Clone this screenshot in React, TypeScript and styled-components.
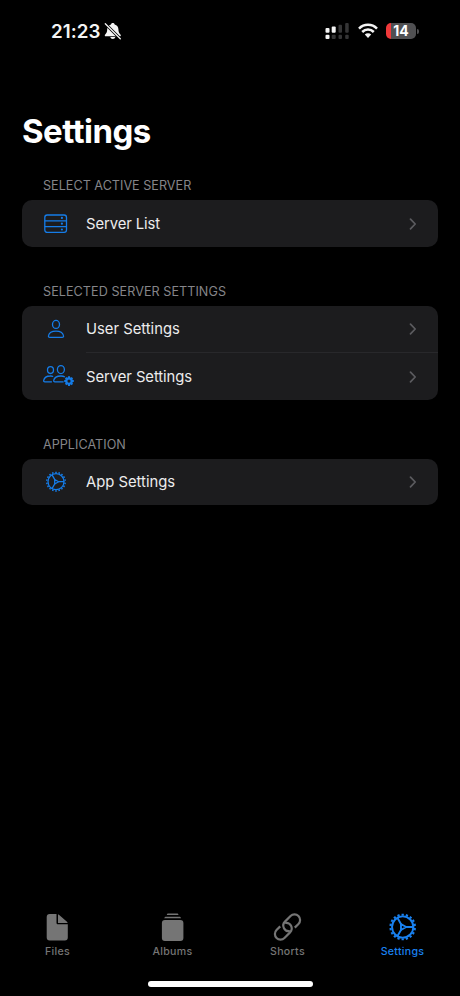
import React from "react";
import styled, { createGlobalStyle } from "styled-components";

const Global = createGlobalStyle`
  * { box-sizing: border-box; }
  html, body { margin: 0; background: #000; }
  body { font-family: Inter, "Liberation Sans", sans-serif; -webkit-font-smoothing: antialiased; }
`;

const Screen = styled.div`
  width: 460px;
  height: 996px;
  background: #000;
  display: flex;
  flex-direction: column;
  overflow: hidden;
`;

const StatusBar = styled.header`
  height: 62px;
  padding: 0 41px 0 51px;
  display: flex;
  align-items: center;
  justify-content: space-between;
  color: #f4f4f4;
`;

const StatusGroup = styled.div<{ $gap: number }>`
  display: flex;
  align-items: center;
  gap: ${(p) => p.$gap}px;
`;

const Clock = styled.span`
  width: 51px;
  padding-top: 2px;
  font-size: 18.8px;
  font-weight: 600;
  line-height: 22px;
  letter-spacing: 0.05px;
  white-space: nowrap;
`;

const Battery = styled.div`
  width: 30px;
  height: 16px;
  border-radius: 5px;
  background: linear-gradient(90deg, #f0393a 5px, #505052 5px);
  color: #fff;
  font-size: 14px;
  font-weight: 700;
  line-height: 16px;
  text-align: center;
`;

const BatteryTip = styled.div`
  width: 2px;
  height: 5px;
  border-radius: 0 2px 2px 0;
  background: #505052;
`;

const Content = styled.main`
  flex: 1;
  padding: 49px 22px 0;
`;

const Title = styled.h1`
  margin: 0;
  height: 41px;
  font-size: 33px;
  font-weight: 700;
  line-height: 40px;
  letter-spacing: -0.55px;
  color: #fff;
`;

const Section = styled.section<{ $top: number }>`
  margin-top: ${(p) => p.$top}px;
`;

const SectionTitle = styled.h2<{ $spacing: number }>`
  margin: 0;
  padding: 0 21px 6px;
  font-size: 12.6px;
  font-weight: 400;
  line-height: 16px;
  letter-spacing: ${(p) => p.$spacing}px;
  color: #858589;
`;

const Card = styled.div`
  border-radius: 10px;
  background: #1c1c1e;
  overflow: hidden;
`;

const Row = styled.div<{ $height: number }>`
  height: ${(p) => p.$height}px;
  padding-left: 18px;
  display: flex;
  align-items: center;
`;

const IconSlot = styled.span`
  width: 46px;
  height: 32px;
  flex: none;
  color: #157ce8;
  svg { display: block; }
`;

const RowBody = styled.div<{ $divided?: boolean }>`
  flex: 1;
  height: 100%;
  padding-right: 21px;
  display: flex;
  align-items: center;
  justify-content: space-between;
  border-top: ${(p) => (p.$divided ? "1px solid #28282b" : "none")};
`;

const Label = styled.span<{ $spacing: number }>`
  font-size: 14.8px;
  line-height: 20px;
  letter-spacing: ${(p) => p.$spacing}px;
  color: #ececed;
`;

const TabBar = styled.nav`
  height: 69px;
  display: grid;
  grid-template-columns: repeat(4, 115px);
`;

const Tab = styled.div<{ $active?: boolean }>`
  display: flex;
  flex-direction: column;
  align-items: center;
  color: ${(p) => (p.$active ? "#1981f0" : "#757575")};
  svg { display: block; }
`;

const TabLabel = styled.span`
  margin-top: 2px;
  font-size: 10.6px;
  font-weight: 500;
  line-height: 15px;
  letter-spacing: 0.28px;
`;

const HomeArea = styled.footer`
  height: 15px;
  display: flex;
  justify-content: center;
  align-items: flex-start;
`;

const HomeBar = styled.div`
  width: 165px;
  height: 6px;
  border-radius: 3px;
  background: #fff;
`;

const polar = (cx: number, cy: number, r: number, deg: number) => {
  const a = (deg * Math.PI) / 180;
  return `${(cx + r * Math.cos(a)).toFixed(2)} ${(cy + r * Math.sin(a)).toFixed(2)}`;
};

function Gear({ cx, cy, r, stroke }: { cx: number; cy: number; r: number; stroke: number }) {
  const teeth = Array.from({ length: 18 }, (_, i) => i * 20 + 10)
    .map((d) => `M${polar(cx, cy, r * 0.85, d)}L${polar(cx, cy, r, d)}`)
    .join("");
  const spokes = [0, 120, 240]
    .map((d) => `M${polar(cx, cy, r * 0.24, d)}L${polar(cx, cy, r * 0.82, d)}`)
    .join("");
  const hub = `M${polar(cx, cy, r * 0.26, 0)}L${polar(cx, cy, r * 0.26, 120)}L${polar(cx, cy, r * 0.26, 240)}Z`;
  return (
    <g fill="none" stroke="currentColor" strokeWidth={stroke}>
      <circle cx={cx} cy={cy} r={r * 0.8} />
      <path d={teeth} strokeWidth={stroke * 1.2} />
      <path d={spokes} />
      <path d={hub} strokeLinejoin="round" />
    </g>
  );
}

const MutedBell = () => (
  <svg width="18" height="18" viewBox="0.700 0 18 18">
    <path d="M9.500 1c-1 0-1.700.6-1.800 1.400C5.200 3.100 3.900 5 3.900 7.300c0 2.700-.8 4-2 5.100-.8.800-.4 1.800.6 1.800h14c1 0 1.400-1 .6-1.800-1.200-1.100-2-2.400-2-5.100 0-2.300-1.300-4.200-3.800-4.900C11.200 1.600 10.500 1 9.500 1ZM6.900 15a2.700 2.700 0 0 0 5.200 0Z" fill="currentColor" />
    <path d="M2 1.700 17 16.700" stroke="#000" strokeWidth="2.900" />
    <path d="M2 1.700 17 16.700" stroke="currentColor" strokeWidth="1.300" strokeLinecap="round" />
  </svg>
);

const Signal = () => (
  <svg width="25" height="18" viewBox="0 0 25 18">
    <g fill="#f4f4f4">
      <rect x="0.500" y="6" width="4" height="4.800" rx="1" />
      <rect x="6.700" y="4.500" width="4" height="6.300" rx="1" />
      <rect x="0.500" y="12.700" width="4" height="4.300" rx="1" />
    </g>
    <g fill="#353536">
      <rect x="13.500" y="2.800" width="3.500" height="8" rx="1" />
      <rect x="20.200" y="1" width="3.500" height="9.800" rx="1" />
      <rect x="6.700" y="12.700" width="4" height="4.300" rx="1" />
      <rect x="13.500" y="12.700" width="3.500" height="4.300" rx="1" />
      <rect x="20.200" y="12.700" width="3.500" height="4.300" rx="1" />
    </g>
  </svg>
);

const Wifi = () => (
  <svg width="20" height="16" viewBox="0 0 20 16">
    <g fill="none" stroke="currentColor" strokeWidth="2.500">
      <path d="M1 5.600a12.700 12.700 0 0 1 18 0" />
      <path d="M4.200 9a8.200 8.200 0 0 1 11.600 0" />
    </g>
    <path d="M6.800 11.600a4.500 4.500 0 0 1 6.400 0L10 14.900Z" fill="currentColor" />
  </svg>
);

const ServerIcon = () => (
  <svg width="46" height="32" viewBox="0 0 46 32">
    <g fill="none" stroke="currentColor" strokeWidth="1.300">
      <rect x="4.800" y="7" width="21.700" height="17.400" rx="2.400" />
      <path d="M4.800 12.800h21.700M4.800 18.600h21.700" />
    </g>
    <g fill="currentColor">
      <circle cx="21.900" cy="9.900" r="1.100" />
      <circle cx="21.900" cy="15.700" r="1.100" />
      <circle cx="21.900" cy="21.500" r="1.100" />
    </g>
  </svg>
);

const UserIcon = () => (
  <svg width="46" height="32" viewBox="0 0 46 32">
    <g fill="none" stroke="currentColor" strokeWidth="1.300">
      <ellipse cx="16" cy="11.400" rx="3.500" ry="4" />
      <path d="M9.800 24.300c-1.100 0-1.500-.7-1.300-1.600.5-2.600 3.400-4.600 7.500-4.600s7 2 7.500 4.600c.2.900-.2 1.600-1.300 1.600Z" />
    </g>
  </svg>
);

const UsersGearIcon = () => {
  const teeth = Array.from({ length: 8 }, (_, i) => i * 45)
    .map((d) => `M${polar(29, 20.4, 3, d)}L${polar(29, 20.4, 4.8, d)}`)
    .join("");
  return (
    <svg width="46" height="32" viewBox="0 -0.700 46 32">
      <g fill="none" stroke="currentColor" strokeWidth="1.300">
        <ellipse cx="10.500" cy="9.400" rx="3" ry="3.400" />
        <path d="M13.200 15.800a8 8 0 0 0-3-.5c-3.700 0-6 2-6.500 4.300-.2.900.2 1.500 1.200 1.500h7" />
        <ellipse cx="20.900" cy="8.900" rx="3.500" ry="4" />
        <path d="M24.900 16.300c-1-.6-2.400-1-4-1-4 0-6.700 2-7.200 4.400-.2.800.2 1.400 1.200 1.400h8.700" />
        <circle cx="29" cy="20.400" r="2.700" strokeWidth="2.200" />
        <path d={teeth} strokeWidth="2" />
      </g>
    </svg>
  );
};

const AppGearIcon = () => (
  <svg width="46" height="32" viewBox="0 0 46 32">
    <Gear cx={16} cy={15.7} r={10} stroke={1.3} />
  </svg>
);

const Chevron = () => (
  <svg width="8" height="12" viewBox="0 0.500 8 12">
    <path d="m1.500 1.700 4.700 4.800-4.700 4.800" fill="none" stroke="#5b5b5f" strokeWidth="1.700" strokeLinecap="round" strokeLinejoin="round" />
  </svg>
);

const FilesIcon = () => (
  <svg width="30" height="30" viewBox="0.700 0 30 30">
    <g fill="currentColor">
      <path d="M7.400 2h6.800v8.700c0 1 .6 1.600 1.600 1.600h9.700v13.200c0 2-1 3-3 3H7.400c-2 0-3-1-3-3V5c0-2 1-3 3-3Z" />
      <path d="M15.700 2.200c.6.200 1 .5 1.500 1l7.200 6.200c.5.500.8.900 1 1.500h-9.700Z" />
    </g>
  </svg>
);

const AlbumsIcon = () => (
  <svg width="30" height="30" viewBox="0.600 0 30 30">
    <g fill="currentColor">
      <rect x="4.500" y="8" width="21.500" height="21" rx="3" />
      <path d="M6.800 6.300c.2-1 .8-1.600 1.900-1.600h13.100c1.100 0 1.700.6 1.900 1.600ZM9.400 2.900c.2-.9.700-1.400 1.500-1.400h8.700c.8 0 1.300.5 1.500 1.400Z" />
    </g>
  </svg>
);

const LinkIcon = () => (
  <svg width="30" height="30" viewBox="0 0 30 30">
    <g transform="rotate(-45 14.500 15)" fill="none" stroke="currentColor" strokeWidth="2.200" strokeLinecap="butt">
      <path d="M9.800 9.400H4.600a5.600 5.600 0 0 0 0 11.200h7.900a5.600 5.600 0 0 0 3.200-10.200" />
      <path d="M19.200 20.600h5.200a5.600 5.600 0 0 0 0-11.200h-7.900a5.600 5.600 0 0 0-3.200 10.200" />
    </g>
  </svg>
);

const TabGearIcon = () => (
  <svg width="30" height="30" viewBox="0 0 30 30">
    <Gear cx={14.7} cy={15} r={13.3} stroke={1.9} />
  </svg>
);

type Item = { label: string; spacing: number; icon: React.ReactNode; height: number };
type Group = { title: string; spacing: number; top: number; items: Item[] };

const groups: Group[] = [
  {
    title: "SELECT ACTIVE SERVER", spacing: 0.02, top: 26,
    items: [{ label: "Server List", spacing: -0.08, icon: <ServerIcon />, height: 47 }],
  },
  {
    title: "SELECTED SERVER SETTINGS", spacing: 0.06, top: 37,
    items: [
      { label: "User Settings", spacing: 0, icon: <UserIcon />, height: 46 },
      { label: "Server Settings", spacing: -0.06, icon: <UsersGearIcon />, height: 48 },
    ],
  },
  {
    title: "APPLICATION", spacing: 0.03, top: 37,
    items: [{ label: "App Settings", spacing: 0, icon: <AppGearIcon />, height: 46 }],
  },
];

const tabs = [
  { label: "Files", icon: <FilesIcon /> },
  { label: "Albums", icon: <AlbumsIcon /> },
  { label: "Shorts", icon: <LinkIcon /> },
  { label: "Settings", icon: <TabGearIcon />, active: true },
];

export default function App() {
  return (
    <Screen>
      <Global />
      <StatusBar>
        <StatusGroup $gap={2}>
          <Clock>21:23</Clock>
          <MutedBell />
        </StatusGroup>
        <StatusGroup $gap={8}>
          <Signal />
          <Wifi />
          <StatusGroup $gap={1}>
            <Battery>14</Battery>
            <BatteryTip />
          </StatusGroup>
        </StatusGroup>
      </StatusBar>
      <Content>
        <Title>Settings</Title>
        {groups.map((g) => (
          <Section key={g.title} $top={g.top}>
            <SectionTitle $spacing={g.spacing}>{g.title}</SectionTitle>
            <Card>
              {g.items.map((item, i) => (
                <Row key={item.label} $height={item.height}>
                  <IconSlot>{item.icon}</IconSlot>
                  <RowBody $divided={i > 0}>
                    <Label $spacing={item.spacing}>{item.label}</Label>
                    <Chevron />
                  </RowBody>
                </Row>
              ))}
            </Card>
          </Section>
        ))}
      </Content>
      <TabBar>
        {tabs.map((t) => (
          <Tab key={t.label} $active={t.active}>
            {t.icon}
            <TabLabel>{t.label}</TabLabel>
          </Tab>
        ))}
      </TabBar>
      <HomeArea>
        <HomeBar />
      </HomeArea>
    </Screen>
  );
}
